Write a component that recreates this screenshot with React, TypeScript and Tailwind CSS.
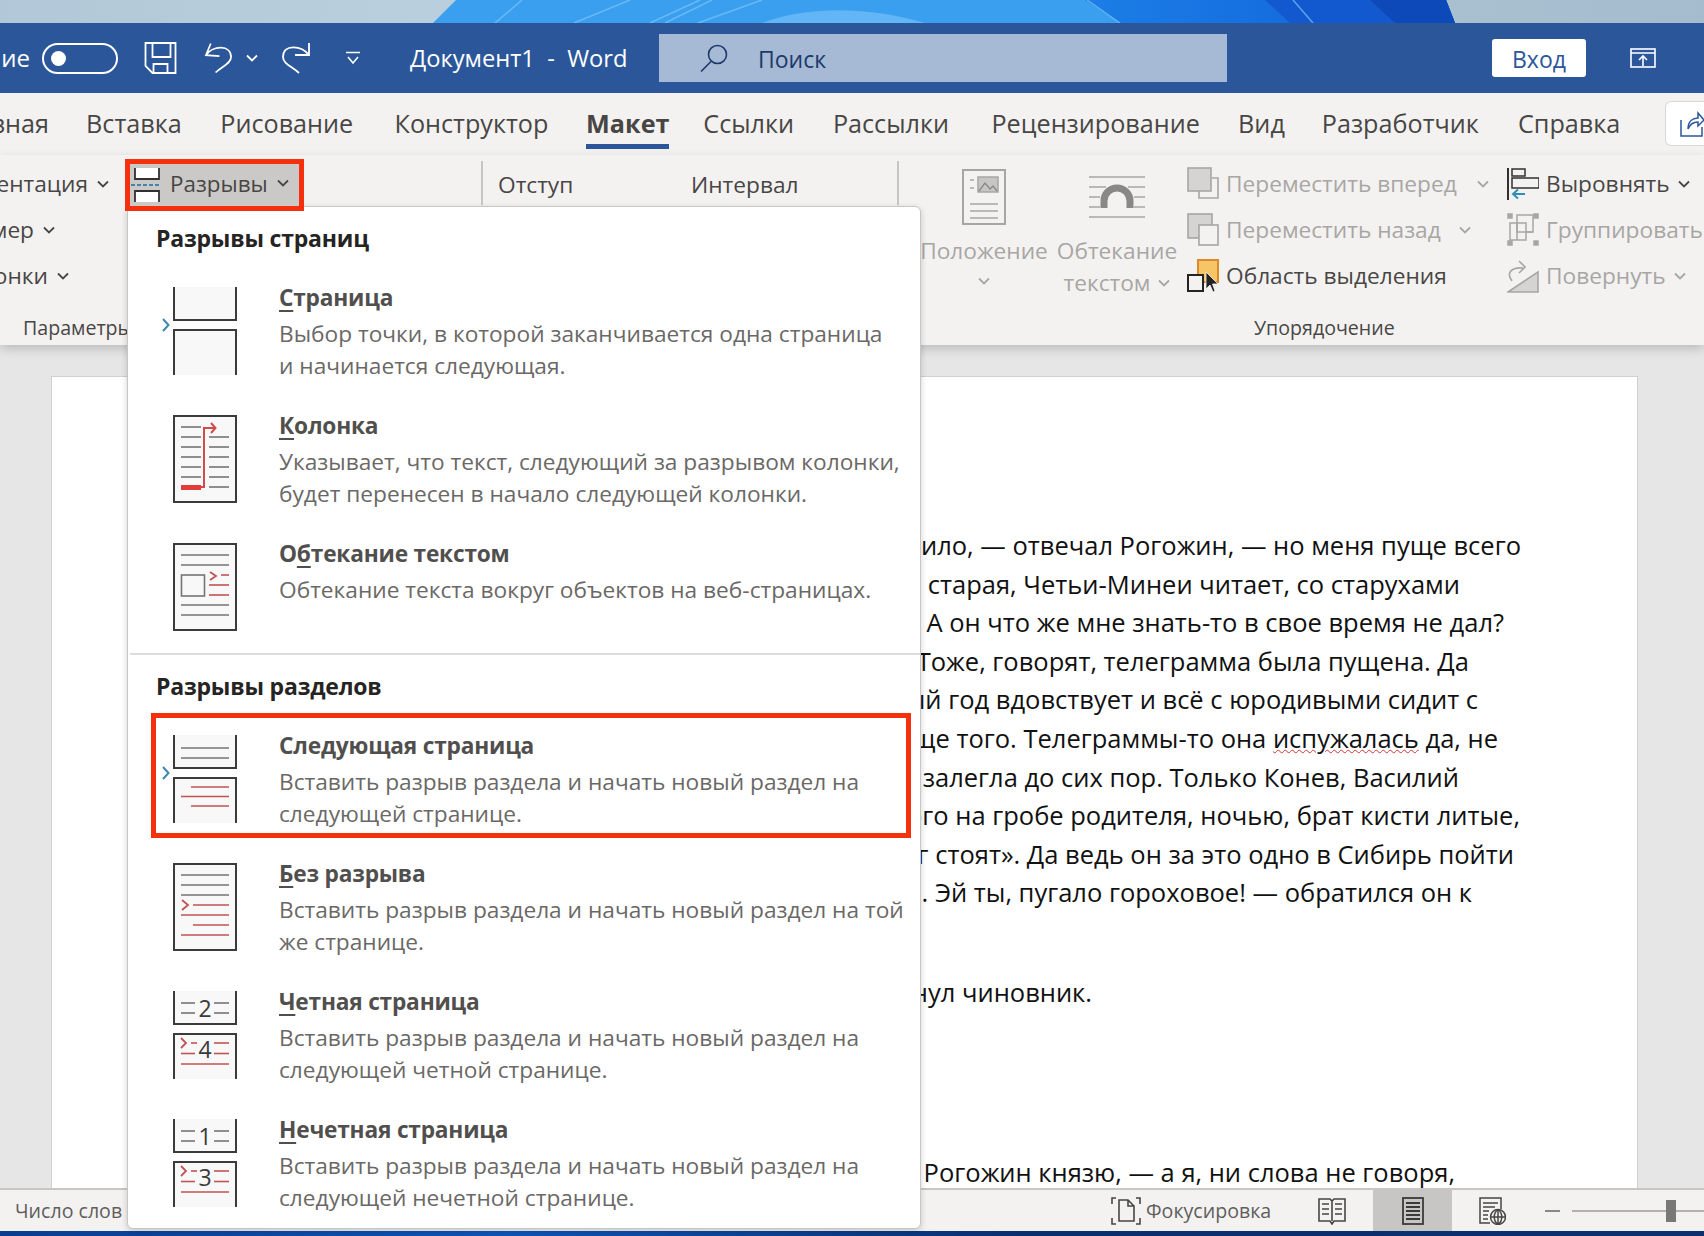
import React from 'react';

const FRAME = '#3b3b3b';
const GREY = '#757575';
const RED = '#bf5454';

function Chevron({ className = '', color = '#484644' }: { className?: string; color?: string }) {
  return (
    <svg viewBox="0 0 12 8" className={`w-[12px] h-[8px] shrink-0 ${className}`} fill="none" stroke={color} strokeWidth="1.8">
      <path d="M1 1.5 L6 6.5 L11 1.5" />
    </svg>
  );
}

/* ---------- menu icons ---------- */
function Lines({ ys, x1 = 8, x2 = 56, color = GREY }: { ys: number[]; x1?: number; x2?: number; color?: string }) {
  return (
    <>
      {ys.map((y) => (
        <path key={y} d={`M${x1} ${y} H${x2}`} stroke={color} strokeWidth="1.6" />
      ))}
    </>
  );
}

function Split({ children }: { children?: React.ReactNode }) {
  return (
    <svg viewBox="0 0 64 88" className="w-[64px] h-[88px] shrink-0" fill="none">
      <rect x="1" y="0" width="62" height="33" fill="#f8f8f8" />
      <rect x="1" y="43" width="62" height="45" fill="#f8f8f8" />
      <path d="M1 0 V33 H63 V0" stroke={FRAME} strokeWidth="2" />
      <path d="M1 88 V43 H63 V88" stroke={FRAME} strokeWidth="2" />
      {children}
    </svg>
  );
}

function Whole({ children }: { children?: React.ReactNode }) {
  return (
    <svg viewBox="0 0 64 88" className="w-[64px] h-[88px] shrink-0" fill="none">
      <rect x="1" y="1" width="62" height="86" fill="#f8f8f8" stroke={FRAME} strokeWidth="2" />
      {children}
    </svg>
  );
}

const pageIcon = <Split />;

const columnIcon = (
  <Whole>
    <Lines ys={[12, 22, 32, 42, 52, 62]} x1={8} x2={28} />
    <Lines ys={[22, 32, 42, 52, 62, 72]} x1={36} x2={56} />
    <path d="M8 72.5 H28" stroke="#e03c3c" strokeWidth="5" />
    <path d="M28 72 H31 V13 H42 M38 8 L42.5 13 L38 18" stroke="#d24b4b" strokeWidth="2" />
  </Whole>
);

const wrapIcon = (
  <Whole>
    <Lines ys={[12, 22, 62, 72]} />
    <rect x="8.5" y="32" width="23" height="21" stroke={GREY} strokeWidth="1.6" />
    <path d="M37 29 L43 33 L37 37" stroke={RED} strokeWidth="1.8" />
    <path d="M48 32 H56" stroke={RED} strokeWidth="1.6" />
    <Lines ys={[42, 52]} x1={36} x2={56} color={RED} />
  </Whole>
);

const nextIcon = (
  <Split>
    <Lines ys={[13, 23]} />
    <Lines ys={[52, 71]} x1={18} x2={56} color={RED} />
    <Lines ys={[61.5]} color={RED} />
  </Split>
);

const continuousIcon = (
  <Whole>
    <Lines ys={[12, 22, 32]} />
    <path d="M9 37 L15 42 L9 47" stroke={RED} strokeWidth="1.8" />
    <Lines ys={[42, 62]} x1={20} x2={56} color={RED} />
    <Lines ys={[52, 72]} color={RED} />
  </Whole>
);

function Numbered({ top, bottom, dash }: { top: string; bottom: string; dash: number }) {
  return (
    <Split>
      <Lines ys={[12, 22]} x1={8} x2={22} />
      <Lines ys={[12, 22]} x1={41} x2={56} />
      <text x="32" y="26" textAnchor="middle" fontSize="23" fill="#3b3b3b" fontFamily="Open Sans, sans-serif">{top}</text>
      <path d="M8 47 L13 52 L8 57" stroke={RED} strokeWidth="1.8" />
      <Lines ys={[52]} x1={dash} x2={24} color={RED} />
      <Lines ys={[62.5]} x1={8} x2={22} color={RED} />
      <Lines ys={[52, 62.5]} x1={41} x2={56} color={RED} />
      <Lines ys={[73]} color={RED} />
      <text x="32" y="67" textAnchor="middle" fontSize="23" fill="#3b3b3b" fontFamily="Open Sans, sans-serif">{bottom}</text>
    </Split>
  );
}

/* ---------- menu ---------- */
function MenuItem({ icon, title, lines, marked, last }: {
  icon: React.ReactNode;
  title: React.ReactNode;
  lines: string[];
  marked?: boolean;
  last?: boolean;
}) {
  return (
    <div className={`flex pl-[45px] ${last ? 'h-[110px]' : 'h-[128px]'}`}>
      <div className="relative w-[64px] h-[88px] shrink-0">
        {marked && (
          <svg viewBox="0 0 8 14" className="absolute left-[-11px] top-[31px] w-[8px] h-[14px]" fill="none" stroke="#3d87ad" strokeWidth="2">
            <path d="M1 1 L6.5 7 L1 13" />
          </svg>
        )}
        {icon}
      </div>
      <div className="ml-[42px] -mt-[5px]">
        <div className="font-bold text-[22.7px] leading-[32px] text-[#514f4d] tracking-[-0.2px]">{title}</div>
        <div className="mt-[4px] text-[22.7px] leading-[32px] text-[#6a6866] whitespace-nowrap">
          {lines.map((l) => (
            <div key={l}>{l}</div>
          ))}
        </div>
      </div>
    </div>
  );
}

const Key = ({ c }: { c: string }) => <span className="underline underline-offset-[4px]">{c}</span>;

function BreaksMenu() {
  return (
    <div className="absolute left-[127px] top-[206px] z-20 w-[794px] h-[1023px] bg-white border border-[#c8c6c4] rounded-[6px] shadow-[0_2px_6px_rgba(0,0,0,0.18)]">
      <div className="h-[80px] pt-[15px] pl-[28px] font-bold text-[23px] leading-[32px] text-[#252423] tracking-[-0.2px]">Разрывы страниц</div>
      <MenuItem
        marked
        icon={pageIcon}
        title={<><Key c="С" />траница</>}
        lines={['Выбор точки, в которой заканчивается одна страница', 'и начинается следующая.']}
      />
      <MenuItem
        icon={columnIcon}
        title={<><Key c="К" />олонка</>}
        lines={['Указывает, что текст, следующий за разрывом колонки,', 'будет перенесен в начало следующей колонки.']}
      />
      <MenuItem
        last
        icon={wrapIcon}
        title={<>О<Key c="б" />текание текстом</>}
        lines={['Обтекание текста вокруг объектов на веб-страницах.']}
      />
      <div className="ml-[2px] h-[2px] bg-[#dedcda]" />
      <div className="h-[80px] pt-[15px] pl-[28px] font-bold text-[23px] leading-[32px] text-[#252423] tracking-[-0.2px]">Разрывы разделов</div>
      <MenuItem
        marked
        icon={nextIcon}
        title={<>Следующая страница</>}
        lines={['Вставить разрыв раздела и начать новый раздел на', 'следующей странице.']}
      />
      <MenuItem
        icon={continuousIcon}
        title={<><Key c="Б" />ез разрыва</>}
        lines={['Вставить разрыв раздела и начать новый раздел на той', 'же странице.']}
      />
      <MenuItem
        icon={<Numbered top="2" bottom="4" dash={18} />}
        title={<><Key c="Ч" />етная страница</>}
        lines={['Вставить разрыв раздела и начать новый раздел на', 'следующей четной странице.']}
      />
      <MenuItem
        icon={<Numbered top="1" bottom="3" dash={18} />}
        title={<><Key c="Н" />ечетная страница</>}
        lines={['Вставить разрыв раздела и начать новый раздел на', 'следующей нечетной странице.']}
      />
      {/* red callout round the chosen item */}
      <div className="absolute left-[23px] top-[506px] w-[760px] h-[125px] border-[5px] border-[#f5300c]" />
    </div>
  );
}

/* ---------- title bar ---------- */
function TitleBar() {
  return (
    <div className="h-[70px] bg-[#2b579a] flex items-center text-white shrink-0">
      <div className="w-[30px] flex justify-end text-[24px] whitespace-nowrap">Автосохранение</div>
      <div className="ml-[12px] w-[76px] h-[31px] rounded-full border-2 border-white flex items-center pl-[7px]">
        <div className="w-[15px] h-[15px] rounded-full bg-white" />
      </div>
      <svg viewBox="0 0 32 32" className="ml-[26px] w-[33px] h-[32px]" fill="none" stroke="white" strokeWidth="1.8">
        <path d="M1 1 H31 V31 H8 L1 24 Z" />
        <path d="M8 1 V15 H26 V1 M9 31 V22 H23 V31" />
      </svg>
      <svg viewBox="0 0 30 32" className="ml-[27px] w-[29px] h-[32px]" fill="none" stroke="white" strokeWidth="1.8">
        <path d="M7 1 L2 13 L16 14 M2 13 C9 3 28 2 28 15 C28 22 18 25 12 31" />
      </svg>
      <Chevron className="ml-[13px]" color="white" />
      <svg viewBox="0 0 30 32" className="ml-[23px] w-[30px] h-[32px]" fill="none" stroke="white" strokeWidth="1.8">
        <path d="M28 1 V13 H14 M28 13 C20 3 2 2 2 15 C2 22 12 25 18 31" />
      </svg>
      <svg viewBox="0 0 14 14" className="ml-[35px] w-[14px] h-[14px]" fill="none" stroke="white" strokeWidth="1.6">
        <path d="M0 1.5 H14 M2 6 L7 12 L12 6" />
      </svg>
      <div className="ml-[50px] w-[216px] pt-[2px] text-[23.7px] whitespace-pre">Документ1  -  Word</div>
      <div className="ml-[33px] w-[568px] h-[48px] bg-[#a6b9d5] flex items-center pl-[41px] text-[#1e3a6b]">
        <svg viewBox="0 0 28 28" className="w-[28px] h-[28px]" fill="none" stroke="#1e3a6b" strokeWidth="1.6">
          <circle cx="17.5" cy="10.5" r="9" />
          <path d="M11 17.5 L1 27.5" />
        </svg>
        <span className="ml-[30px] pt-[2px] text-[23px]">Поиск</span>
      </div>
      <div className="ml-[265px] w-[94px] h-[38px] pt-[3px] rounded-[3px] bg-white text-[#2b579a] text-[23px] flex items-center justify-center">Вход</div>
      <svg viewBox="0 0 26 20" className="ml-[44px] w-[26px] h-[20px]" fill="none" stroke="white" strokeWidth="1.6">
        <rect x="1" y="1" width="24" height="18" />
        <path d="M1 5 H25 M13 18 V8 M9 12 L13 8 L17 12" />
      </svg>
    </div>
  );
}

/* ---------- tabs ---------- */
const tabs = [
  { label: 'Вставка', w: 'w-[132px]' },
  { label: 'Рисование', w: 'w-[174px]' },
  { label: 'Конструктор', w: 'w-[196px]' },
  { label: 'Макет', w: 'w-[117px]', active: true },
  { label: 'Ссылки', w: 'w-[125px]' },
  { label: 'Рассылки', w: 'w-[160px]' },
  { label: 'Рецензирование', w: 'w-[250px]' },
  { label: 'Вид', w: 'w-[82px]' },
  { label: 'Разработчик', w: 'w-[196px]' },
  { label: 'Справка', w: 'w-[142px]' },
];

function Tabs() {
  return (
    <div className="h-[62px] bg-[#f3f2f1] flex items-start pt-[12px] text-[25.2px] text-[#484644] shrink-0">
      <div className="w-[49px] mr-[19px] flex justify-end leading-[36px] whitespace-nowrap">Главная</div>
      {tabs.map((t) => (
        <div key={t.label} className={`${t.w} flex justify-center`}>
          <span className={`h-[44px] leading-[36px] border-b-[5px] ${t.active ? 'border-[#2b579a] font-bold' : 'border-transparent'}`}>{t.label}</span>
        </div>
      ))}
      <div className="ml-[25px] -mt-[4px] flex-1 h-[45px] bg-white border border-[#d9d7d5] border-r-0 rounded-l-[6px] flex items-center pl-[14px]">
        <svg viewBox="0 0 24 26" className="w-[24px] h-[26px] shrink-0" fill="none" stroke="#2b579a" strokeWidth="1.5">
          <path d="M1 9 V25 H22 V16 M8 18 C8 10 13 7 18 7 V2 L24 9 L18 15 V11 C13 11 10 13 8 18 Z" />
        </svg>
      </div>
    </div>
  );
}

/* ---------- ribbon ---------- */
function LeftRow({ word, end }: { word: string; end: string }) {
  return (
    <div className="h-[46px] shrink-0 flex items-center">
      <div className={`${end} flex justify-end whitespace-nowrap`}>{word}</div>
      <Chevron className="ml-[9px]" />
    </div>
  );
}

function ToolRow({ icon, label, disabled, chevron }: { icon: React.ReactNode; label: string; disabled?: boolean; chevron?: string }) {
  return (
    <div className={`h-[46px] shrink-0 flex items-center ${disabled ? 'text-[#a8a6a4]' : 'text-[#484644]'}`}>
      <div className="w-[39px] shrink-0">{icon}</div>
      <span className="whitespace-nowrap">{label}</span>
      {chevron && <Chevron className={chevron} color={disabled ? '#a8a6a4' : '#484644'} />}
    </div>
  );
}

const forwardIcon = (
  <svg viewBox="0 0 32 34" className="w-[32px] h-[34px]" fill="none" stroke="#a8a6a4" strokeWidth="1.6">
    <rect x="1" y="1" width="23" height="23" fill="#d6d4d2" />
    <path d="M25 11 H31 V31 H12 V24" />
  </svg>
);
const backwardIcon = (
  <svg viewBox="0 0 32 34" className="w-[32px] h-[34px]" fill="none" stroke="#a8a6a4" strokeWidth="1.6">
    <rect x="1" y="1" width="24" height="24" fill="#d6d4d2" />
    <rect x="12" y="12" width="19" height="20" fill="#f3f2f1" />
  </svg>
);
const selectionIcon = (
  <svg viewBox="0 0 32 34" className="w-[32px] h-[34px]" fill="none">
    <rect x="11" y="1" width="20" height="22" fill="#f7c566" stroke="#d98a2b" strokeWidth="2" />
    <rect x="1" y="16" width="15" height="16" fill="#f3f2f1" stroke="#252423" strokeWidth="2" />
    <path d="M19 13 V30 L23 26 L26 33 L28 32 L25.5 25 L31 25 Z" fill="#252423" stroke="#f3f2f1" strokeWidth="0.8" />
  </svg>
);
const alignIcon = (
  <svg viewBox="0 0 32 34" className="w-[32px] h-[34px]" fill="none">
    <path d="M1 1 V33" stroke="#323130" strokeWidth="2" />
    <rect x="5" y="2" width="13" height="7" stroke="#323130" strokeWidth="1.5" />
    <rect x="5" y="11" width="27" height="10" stroke="#323130" strokeWidth="1.5" />
    <path d="M18 27 H6 M11 22.5 L6 27 L11 31.5" stroke="#2f8fb5" strokeWidth="2" />
  </svg>
);
const groupIcon = (
  <svg viewBox="0 0 32 34" className="w-[32px] h-[34px]" fill="none" stroke="#a8a6a4" strokeWidth="1.5">
    <path d="M1 1 h4 v4 h-4 Z M27 1 h4 v4 h-4 Z M1 28 h4 v4 h-4 Z M27 28 h4 v4 h-4 Z" fill="#a8a6a4" />
    <rect x="10" y="2" width="16" height="17" />
    <rect x="3" y="10" width="16" height="17" />
    <path d="M10 10 V27 M19 19 H26" />
  </svg>
);
const rotateIcon = (
  <svg viewBox="0 0 32 34" className="w-[32px] h-[34px]" fill="none" stroke="#a8a6a4" strokeWidth="1.6">
    <path d="M1 33 L31 13 V33 Z" fill="#d6d4d2" />
    <path d="M5 22 C-1 14 4 8 16 9 M12 2 L18 8 L12 14" />
  </svg>
);

function Ribbon() {
  return (
    <div className="relative h-[190px] bg-[#f3f2f1] flex text-[22.7px] text-[#484644] shrink-0 shadow-[0_4px_10px_rgba(0,0,0,0.18)]">
      {/* page setup, cut off at the left */}
      <div className="w-[125px] shrink-0 flex flex-col pt-[6px]">
        <LeftRow word="Ориентация" end="w-[88px]" />
        <LeftRow word="Размер" end="w-[34px]" />
        <LeftRow word="Колонки" end="w-[48px]" />
        <div className="mt-[15px] pl-[23px] text-[19.6px] leading-[28px] whitespace-nowrap">Параметры страницы</div>
      </div>
      <div className="w-[356px] shrink-0">
        <div className="relative z-30 mt-[4px] w-[179px] h-[52px] border-[5px] border-[#f5300c] bg-[#cbc9c7] flex items-center overflow-hidden">
          <svg viewBox="0 0 32 34" className="w-[32px] h-[34px] shrink-0" fill="none">
            <path d="M5 0 H29 V11 H5 Z" fill="#fff" />
            <path d="M5 0 V11 H29 V0" stroke="#323130" strokeWidth="1.8" />
            <path d="M1 17 H31" stroke="#3d87ad" strokeWidth="1.8" strokeDasharray="4 2" />
            <path d="M5 23 H29 V34 H5 Z" fill="#fff" />
            <path d="M5 34 V23 H29 V34" stroke="#323130" strokeWidth="1.8" />
          </svg>
          <span className="ml-[8px] -mt-[2px] text-[22.4px]">Разрывы</span>
          <Chevron className="ml-[9px] -mt-[4px]" />
        </div>
      </div>
      <div className="w-[2px] h-[44px] mt-[6px] bg-[#c8c6c4] shrink-0" />
      <div className="w-[414px] shrink-0 flex pt-[15px] pl-[15px] leading-[30px]">
        <span className="w-[193px]">Отступ</span>
        <span>Интервал</span>
      </div>
      <div className="w-[2px] h-[44px] mt-[6px] bg-[#c8c6c4] shrink-0" />
      {/* arrange group */}
      <div className="flex-1 min-w-0 flex flex-col overflow-hidden">
        <div className="flex h-[159px] shrink-0">
          <div className="w-[16px] shrink-0" />
          <div className="w-[138px] shrink-0 flex flex-col items-center text-[#a8a6a4] pt-[14px]">
            <svg viewBox="0 0 44 56" className="w-[44px] h-[56px]" fill="none" stroke="#a8a6a4" strokeWidth="2">
              <rect x="1" y="1" width="42" height="54" />
              <path d="M8 11 H12 M8 19 H12 M8 35 H36 M8 42 H36 M8 49 H36" strokeWidth="1.5" />
              <rect x="16" y="8" width="20" height="15" fill="#c8c6c4" strokeWidth="1.5" />
              <path d="M17 22 L23 14 L28 20 L31 17 L35 22" strokeWidth="1.3" stroke="#8a8886" />
            </svg>
            <div className="mt-[10px] leading-[32px]">Положение</div>
            <Chevron className="mt-[10px]" color="#a8a6a4" />
          </div>
          <div className="w-[128px] shrink-0 flex flex-col items-center text-[#a8a6a4] pt-[14px]">
            <div className="h-[56px] flex items-center">
              <svg viewBox="0 0 56 42" className="w-[56px] h-[42px]" fill="none" stroke="#a8a6a4" strokeWidth="1.6">
                <path d="M0 1 H56 M0 11 H17 M39 11 H56 M0 21 H11 M45 21 H56 M0 31 H11 M45 31 H56 M0 41 H56" />
                <path d="M15 32 V25 A13 13 0 0 1 41 25 V32" stroke="#8a8886" strokeWidth="7" />
              </svg>
            </div>
            <div className="mt-[10px] leading-[32px]">Обтекание</div>
            <div className="flex items-center leading-[32px]">
              текстом
              <Chevron className="ml-[8px]" color="#a8a6a4" />
            </div>
          </div>
          <div className="w-[320px] shrink-0 flex flex-col pt-[6px] ml-[6px]">
            <ToolRow icon={forwardIcon} label="Переместить вперед" disabled chevron="ml-[20px]" />
            <ToolRow icon={backwardIcon} label="Переместить назад" disabled chevron="ml-[18px]" />
            <ToolRow icon={selectionIcon} label="Область выделения" />
          </div>
          <div className="flex-1 flex flex-col pt-[6px]">
            <ToolRow icon={alignIcon} label="Выровнять" chevron="ml-[8px]" />
            <ToolRow icon={groupIcon} label="Группировать" disabled />
            <ToolRow icon={rotateIcon} label="Повернуть" disabled chevron="ml-[8px]" />
          </div>
        </div>
        <div className="pl-[355px] text-[19.6px] leading-[28px] whitespace-nowrap">Упорядочение</div>
      </div>
    </div>
  );
}

/* ---------- document ---------- */
const docLines = [
  { text: 'не знаю, что он у меня пропил и что ему стоило, — отвечал Рогожин, — но меня пуще всего', pr: 'pr-[116px]' },
  { text: 'брат разозлил. Про матушку нечего сказать, женщина старая, Четьи-Минеи читает, со старухами', pr: 'pr-[177px]' },
  { text: 'сидит, и что брат Сенька порешит, так тому и быть. А он что же мне знать-то в свое время не дал?', pr: 'pr-[133px]' },
  { text: 'Понимаем-с! Оно правда, я тогда без памяти был. Тоже, говорят, телеграмма была пущена. Да', pr: 'pr-[168px]' },
  { text: 'телеграмма-то к тетке и приди. А она там тридцатый год вдовствует и всё с юродивыми сидит с', pr: 'pr-[159px]' },
];

export default function App() {
  return (
    <div className="relative w-[1704px] h-[1236px] overflow-hidden flex flex-col bg-[#e6e6e6] font-['Open_Sans',sans-serif]">
      {/* desktop wallpaper */}
      <svg viewBox="0 0 1704 23" className="w-[1704px] h-[23px] shrink-0" preserveAspectRatio="none">
        <defs>
          <linearGradient id="sky" x1="0" x2="1" y1="0" y2="0">
            <stop offset="0" stopColor="#b2c8d8" />
            <stop offset="0.25" stopColor="#b9cfdd" />
            <stop offset="1" stopColor="#a4bccd" />
          </linearGradient>
          <linearGradient id="deep" x1="0" x2="1" y1="0" y2="0">
            <stop offset="0" stopColor="#1c7ee6" />
            <stop offset="1" stopColor="#0f5fd8" />
          </linearGradient>
        </defs>
        <rect width="1704" height="23" fill="url(#sky)" />
        <path d="M456 0 H1446 L1455 23 H433 Z" fill="#3b9fef" />
        <path d="M1085 0 H1446 L1455 23 H1120 Z" fill="url(#deep)" />
        <path d="M1265 0 H1446 L1455 23 H1290 Z" fill="#1258cf" />
        <path d="M1370 0 H1446 L1455 23 H1395 Z" fill="#0d49b8" />
        <path d="M522 0 L495 23 M630 0 L574 23 M700 0 L650 23 M712 0 L665 23 M762 0 L698 23 M1087 0 L1120 23 M1293 0 L1313 23" stroke="#7cc4f7" strokeOpacity="0.7" strokeWidth="1.5" fill="none" />
        <path d="M762 23 C800 8 860 4 925 23 Z" fill="#62b6f5" />
      </svg>
      <TitleBar />
      <Tabs />
      <Ribbon />

      {/* document area */}
      <div className="flex-1 min-h-0 overflow-hidden pt-[31px] pl-[51px]">
        <div className="w-[1587px] h-[900px] bg-white border border-[#d2d0ce] pt-[149px] text-[25.5px] leading-[38.6px] text-[#111] whitespace-nowrap text-right">
          {docLines.map((l) => (
            <div key={l.pr} className={l.pr}>{l.text}</div>
          ))}
          <div className="pr-[139px]">
            Монашка не монашка, а еще пуще того. Телеграммы-то она <span className="underline decoration-wavy decoration-[#d13438] decoration-1">испужалась</span> да, не
          </div>
          <div className="pr-[178px]">распечатывая, в часть и представила, так она там и залегла до сих пор. Только Конев, Василий</div>
          <div className="pr-[117px]">Васильич, выручил, всё отписал. С покрова парчового на гробе родителя, ночью, брат кисти литые,</div>
          <div className="pr-[123px]">золотые, обрезал: «Они, дескать, эвона каких денег стоят». Да ведь он за это одно в Сибирь пойти</div>
          <div className="pr-[165px]">может, если я захочу, потому оно есть святотатство. Эй ты, пугало гороховое! — обратился он к</div>
          <div className="pr-[545px] mt-[61px]">— Святотатство! — тотчас же ввернул чиновник.</div>
          <div className="pr-[182px] mt-[141px]">— Вот она какая женщина! — отвечал Рогожин князю, — а я, ни слова не говоря,</div>
        </div>
      </div>

      {/* status bar */}
      <div className="relative z-10 h-[43px] shrink-0 bg-[#f3f2f1] border-t-2 border-[#c8c6c4] flex items-center text-[19.6px] text-[#605e5c]">
        <span className="ml-[15px] whitespace-nowrap w-[112px] overflow-hidden">Число слов</span>
        <svg viewBox="0 0 30 28" className="ml-[984px] w-[30px] h-[28px] shrink-0" fill="none" stroke="#484644" strokeWidth="1.6">
          <path d="M1 7 V1 H5 M25 1 H29 V7 M1 21 V27 H5 M25 27 H29 V21" />
          <path d="M8 3 H17 L23 9 V24 H8 Z M17 3 V9 H23" />
        </svg>
        <span className="ml-[5px] w-[172px]">Фокусировка</span>
        <svg viewBox="0 0 28 28" className="w-[28px] h-[28px] shrink-0" fill="none" stroke="#484644" strokeWidth="1.6">
          <path d="M1 2 H12 L14 4 L16 2 H27 V24 H16 L14 27 L12 24 H1 Z M14 4 V24 M4 7 H11 M4 12 H11 M4 17 H11 M17 7 H24 M17 12 H24 M17 17 H24" />
        </svg>
        <div className="ml-[27px] w-[79px] h-full bg-[#c8c6c4] flex items-center justify-center">
          <svg viewBox="0 0 22 28" className="w-[22px] h-[28px]" fill="none" stroke="#3b3a39" strokeWidth="1.8">
            <rect x="1" y="1" width="20" height="26" />
            <path d="M4 6 H18 M4 10 H18 M4 14 H18 M4 18 H18 M4 22 H18" />
          </svg>
        </div>
        <svg viewBox="0 0 28 28" className="ml-[26px] w-[28px] h-[28px] shrink-0" fill="none" stroke="#484644" strokeWidth="1.5">
          <path d="M12 26 H2 V1 H23 V12 M5 6 H20 M5 10 H17 M5 14 H11 M5 18 H10 M5 22 H10" />
          <circle cx="20" cy="20" r="7.5" />
          <path d="M12.5 20 H27.5 M20 12.5 V27.5 M20 12.5 C15 16 15 24 20 27.5 M20 12.5 C25 16 25 24 20 27.5" />
        </svg>
        <div className="ml-[39px] w-[15px] h-[2px] bg-[#8a8886] shrink-0" />
        <div className="relative ml-[12px] flex-1 h-[2px] bg-[#b3b0ad]">
          <div className="absolute left-[94px] top-[-10px] w-[10px] h-[22px] bg-[#7a7876]" />
        </div>
      </div>
      <div className="h-[5px] shrink-0 bg-[linear-gradient(90deg,#0a3d8f,#0e55b8_30%,#0a2f6f_60%,#0d2f6e)]" />
      <BreaksMenu />
    </div>
  );
}
